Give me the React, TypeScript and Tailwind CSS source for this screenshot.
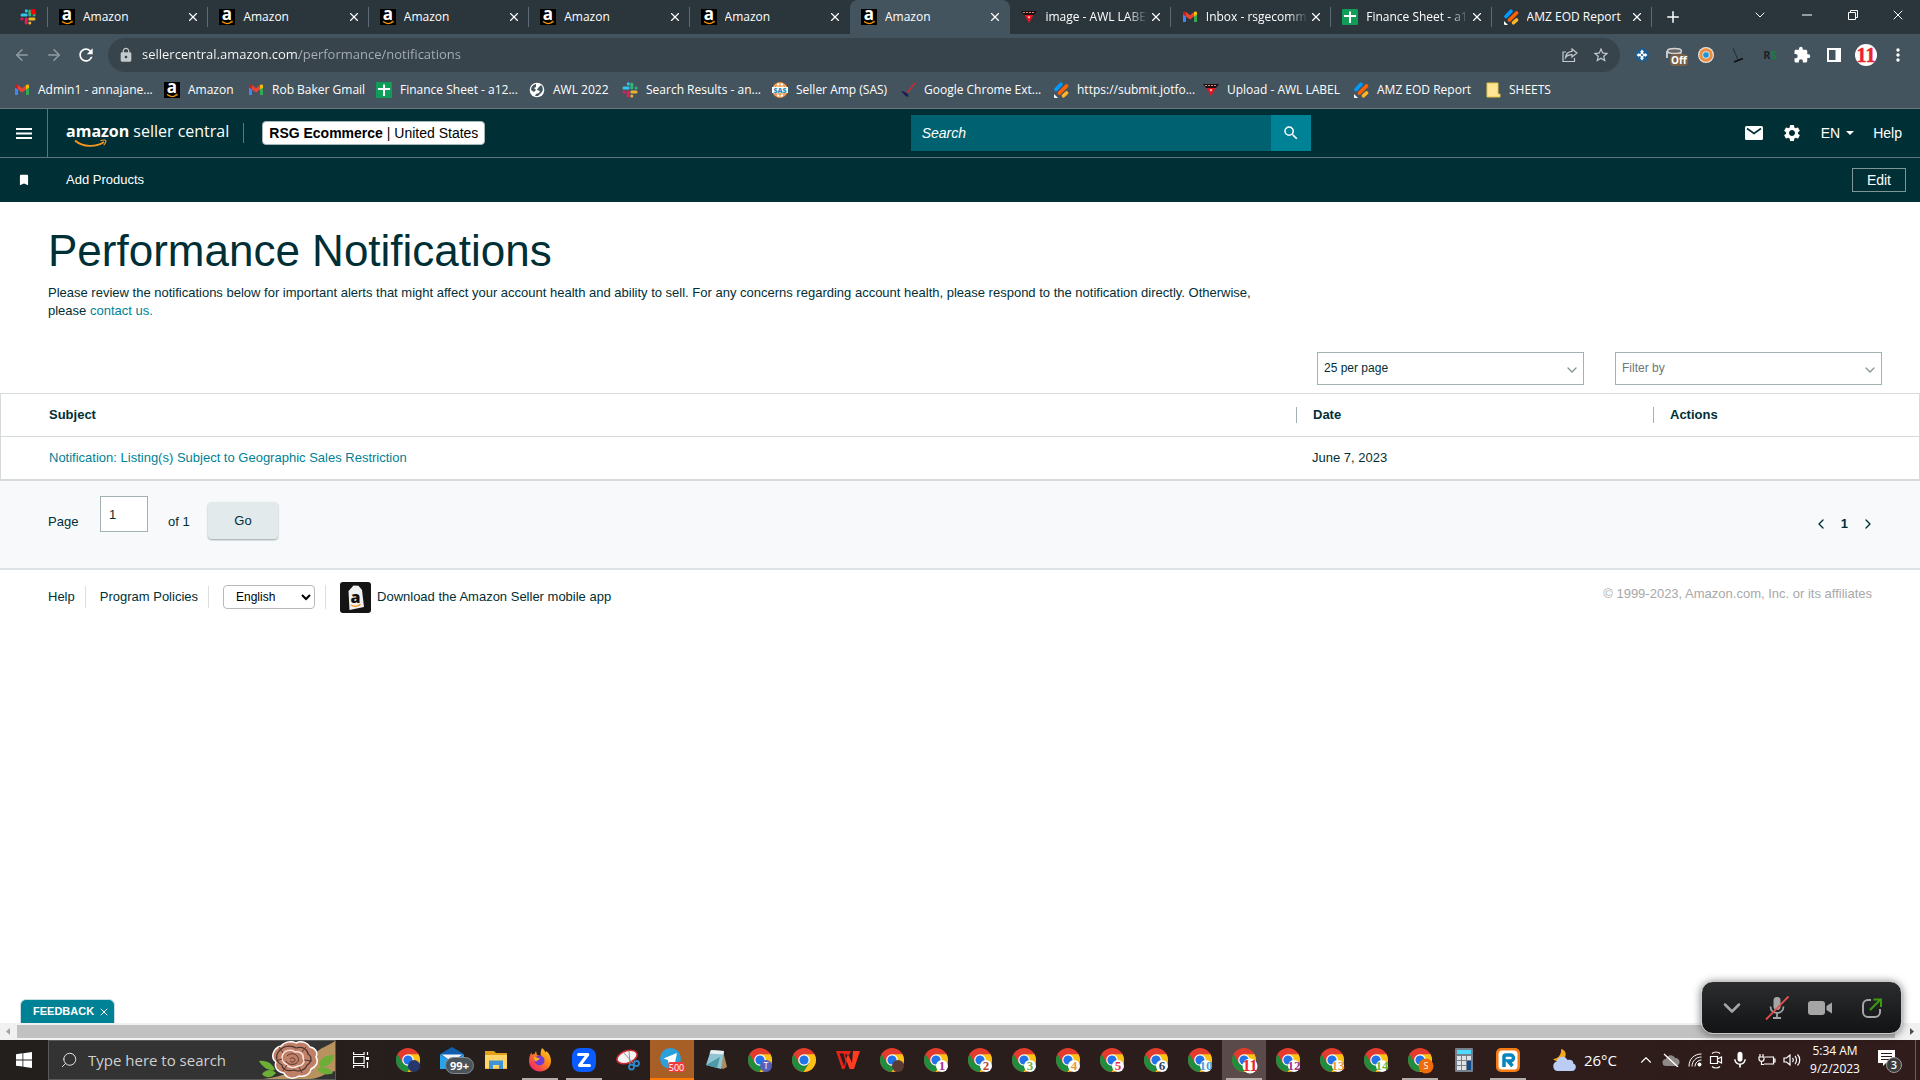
import * as React from "react"
import { clsx } from "clsx"
import {
    ArrowLeft,
    ArrowRight,
    ChevronDown,
    ChevronLeft,
    ChevronRight,
    ChevronUp,
    Minus,
    Plus,
    Search,
    X,
} from "lucide-react"
import {
    MdBookmark,
    MdExtension,
    MdLock,
    MdMic,
    MdMoreVert,
    MdRefresh,
    MdSearch,
    MdSettings,
    MdStarBorder,
} from "react-icons/md"

type IconProps = { className?: string }

/* ---------- site icons ---------- */

function AmazonIcon({ className = "size-4" }: IconProps) {
    return (
        <svg viewBox="0 0 16 16" className={clsx("shrink-0", className)} aria-hidden="true">
            <rect width="16" height="16" fill="#000" />
            <text x="8" y="11" textAnchor="middle" fontFamily="Open Sans, sans-serif" fontWeight="700" fontSize="17" fill="#fff">a</text>
            <path d="M3 12.600c3 2.200 7 2.200 9.600.4" fill="none" stroke="#f90" strokeWidth="1.200" />
            <path d="M11.400 12.300l2-.2-.5 1.800" fill="none" stroke="#f90" strokeWidth=".8" />
        </svg>
    )
}

function SlackIcon({ className = "size-4", dot }: IconProps & { dot?: boolean }) {
    return (
        <svg viewBox="0 0 16 16" className={clsx("shrink-0", className)} aria-hidden="true">
            <g strokeWidth="3" strokeLinecap="round">
                <path d="M2 6h4.200" stroke="#36c5f0" />
                <path d="M6.300 1.800v.1" stroke="#36c5f0" />
                <path d="M9.800 2v4" stroke="#2eb67d" />
                <path d="M14.100 6h.1" stroke="#2eb67d" />
                <path d="M9.800 10H14" stroke="#ecb22e" />
                <path d="M9.800 14v.1" stroke="#ecb22e" />
                <path d="M6.200 10v4" stroke="#e01e5a" />
                <path d="M1.900 10H2" stroke="#e01e5a" />
            </g>
            {dot && <circle cx="13.300" cy="2.700" r="2.700" fill="#f00" />}
        </svg>
    )
}

function GmailIcon() {
    return (
        <svg viewBox="0 0 16 16" className="size-4 shrink-0" aria-hidden="true">
            <path d="M1 4v9h3V7z" fill="#4285f4" />
            <path d="M15 4v9h-3V7z" fill="#34a853" />
            <path d="M1 5.500V4c0-1.600 1.800-1.900 3-1v4.600z" fill="#c5221f" />
            <path d="M15 5.500V4c0-1.600-1.800-1.900-3-1v4.600z" fill="#fbbc04" />
            <path d="M4 3l4 3.200L12 3v4.600l-4 3-4-3z" fill="#ea4335" />
        </svg>
    )
}

function SheetIcon() {
    return (
        <svg viewBox="0 0 16 16" className="size-4 shrink-0" aria-hidden="true">
            <rect width="16" height="16" rx="1" fill="#0f9d58" />
            <path d="M7 2.500h2V6h5v2H9v6H7V8H2V6h5z" fill="#fff" />
        </svg>
    )
}

function GlobeIcon() {
    return (
        <svg viewBox="0 0 16 16" className="size-4 shrink-0" aria-hidden="true">
            <circle cx="8" cy="8" r="7.300" fill="#fff" />
            <path d="M7 2c-3 .5-5 3-5 6l3 2 2-2-2-2 2-1zM9 6l3-3c2 1.500 2.500 5 1 7l-2 2-2 2H6l1-2 3-1 1-2-3-1z" fill="#44545e" />
        </svg>
    )
}

function SasIcon() {
    return (
        <svg viewBox="0 0 16 16" className="size-4 shrink-0" aria-hidden="true">
            <circle cx="8" cy="8" r="7.500" fill="#fff" stroke="#e8832a" />
            <path d="M8 .5v15M4.500 1.500c-1.500 4-1.500 9 0 13M11.500 1.500c1.500 4 1.500 9 0 13M1.500 4h13M1.500 12h13" fill="none" stroke="#e8832a" />
            <rect y="5" width="16" height="6" fill="#fff" />
            <text x="8" y="10.500" textAnchor="middle" fontFamily="Open Sans, sans-serif" fontWeight="800" fontSize="7" fill="#1a8bc4">SAS</text>
        </svg>
    )
}

function BroomIcon() {
    return (
        <svg viewBox="0 0 16 16" className="size-4 shrink-0" aria-hidden="true">
            <path d="M15 1L7 11" stroke="#d8262c" strokeWidth="1.300" />
            <path d="M1 9l3 .5 4 2.500.5 3-3-1z" fill="#1b1b55" />
        </svg>
    )
}

function JotformIcon() {
    return (
        <svg viewBox="0 0 16 16" className="size-4 shrink-0" aria-hidden="true">
            <g strokeLinecap="round" strokeWidth="3.600">
                <path d="M3 7.500L8 2.200" stroke="#0099ff" />
                <path d="M6.500 11L13.500 4" stroke="#ff6100" />
                <path d="M10.500 13.800L13.500 11" stroke="#ffb629" />
            </g>
            <path d="M1 12l4 4H2a1 1 0 0 1-1-1z" fill="#fff" />
        </svg>
    )
}

function LabelIcon() {
    return (
        <svg viewBox="0 0 16 16" className="size-4 shrink-0" aria-hidden="true">
            <path d="M0 2h16l-3 4H3z" fill="#1c1014" />
            <path d="M2 3.500h12" stroke="#d98a7d" strokeDasharray="2 1" />
            <path d="M3.500 6h9L8 14z" fill="#e8121c" />
            <path d="M6.500 7.500h3L8 9.500z" fill="#fff" />
        </svg>
    )
}

function FolderIcon() {
    return (
        <svg viewBox="0 0 16 16" className="size-4 shrink-0" aria-hidden="true">
            <path d="M2 1h11v11h2v3H2z" fill="#ffe594" stroke="#e8c33c" />
        </svg>
    )
}

const siteIcons = {
    amazon: AmazonIcon,
    slack: SlackIcon,
    gmail: GmailIcon,
    sheet: SheetIcon,
    globe: GlobeIcon,
    sas: SasIcon,
    broom: BroomIcon,
    jotform: JotformIcon,
    label: LabelIcon,
    folder: FolderIcon,
}

type SiteIconName = keyof typeof siteIcons

/* ---------- browser chrome ---------- */

interface Tab {
    title: string
    icon: SiteIconName
    active?: boolean
}

const tabs: Tab[] = [
    { title: "Amazon", icon: "amazon" },
    { title: "Amazon", icon: "amazon" },
    { title: "Amazon", icon: "amazon" },
    { title: "Amazon", icon: "amazon" },
    { title: "Amazon", icon: "amazon" },
    { title: "Amazon", icon: "amazon", active: true },
    { title: "image - AWL LABEL", icon: "label" },
    { title: "Inbox - rsgecomm", icon: "gmail" },
    { title: "Finance Sheet - a12", icon: "sheet" },
    { title: "AMZ EOD Report", icon: "jotform" },
]

const bookmarks: { title: string; icon: SiteIconName; width: string }[] = [
    { title: "Admin1 - annajane...", icon: "gmail", width: "w-[150px]" },
    { title: "Amazon", icon: "amazon", width: "w-[84px]" },
    { title: "Rob Baker Gmail", icon: "gmail", width: "w-[128px]" },
    { title: "Finance Sheet - a12...", icon: "sheet", width: "w-[153px]" },
    { title: "AWL 2022", icon: "globe", width: "w-[93px]" },
    { title: "Search Results - an...", icon: "slack", width: "w-[150px]" },
    { title: "Seller Amp (SAS)", icon: "sas", width: "w-[128px]" },
    { title: "Google Chrome Ext...", icon: "broom", width: "w-[153px]" },
    { title: "https://submit.jotfo...", icon: "jotform", width: "w-[150px]" },
    { title: "Upload - AWL LABEL", icon: "label", width: "w-[150px]" },
    { title: "AMZ EOD Report", icon: "jotform", width: "w-[132px]" },
    { title: "SHEETS", icon: "folder", width: "w-[93px]" },
]

function TabStrip() {
    return (
        <div className="flex h-[34px] bg-[#2b363c] text-white">
            <button aria-label="Slack" className="flex w-12 shrink-0 items-center justify-end">
                <SlackIcon dot />
                <span className="ml-[11px] h-5 w-px bg-[#5d6b74]" />
            </button>
            <div role="tablist" className="grid flex-1 grid-cols-10">
                {tabs.map((tab, i) => {
                    const Icon = siteIcons[tab.icon]
                    const nextActive = tabs[i + 1]?.active
                    return (
                        <div
                            key={i}
                            className={clsx(
                                "flex min-w-0 items-center pl-[11px] pr-1.5",
                                tab.active && "rounded-t-lg bg-[#44545e]"
                            )}
                        >
                            <button role="tab" aria-selected={!!tab.active} className="flex min-w-0 flex-1 items-center gap-2">
                                <Icon />
                                <span
                                    className={clsx(
                                        "min-w-0 flex-1 overflow-hidden whitespace-nowrap text-left text-xs leading-5",
                                        tab.title.length > 14 && "[mask-image:linear-gradient(to_right,#000_80%,transparent)]"
                                    )}
                                >
                                    {tab.title}
                                </span>
                            </button>
                            <button aria-label="Close tab" className="flex w-4 shrink-0 justify-center">
                                <X className="size-3.5" />
                            </button>
                            <span
                                className={clsx(
                                    "-mr-1.5 ml-1.5 h-5 w-px",
                                    tab.active || nextActive ? "bg-transparent" : "bg-[#5d6b74]"
                                )}
                            />
                        </div>
                    )
                })}
            </div>
            <div className="flex w-[268px] shrink-0 items-center justify-between pl-3 pr-3.5">
                <button aria-label="New tab"><Plus className="size-[18px]" /></button>
                <div className="flex w-[154px] items-center justify-between pb-1">
                    <button aria-label="Search tabs"><ChevronDown className="size-4" strokeWidth={1.5} /></button>
                    <button aria-label="Minimize"><Minus className="size-4" strokeWidth={1.5} /></button>
                    <button aria-label="Restore">
                        <svg viewBox="0 0 12 12" className="size-3 fill-none stroke-white">
                            <path d="M1.500 3.500h7v7h-7zM3.500 3V1.500h7v7H9" />
                        </svg>
                    </button>
                    <button aria-label="Close"><X className="size-4" strokeWidth={1.5} /></button>
                </div>
            </div>
        </div>
    )
}

function ShareIcon() {
    return (
        <svg viewBox="0 0 16 16" className="size-4 fill-none stroke-[#c3c9cd]" strokeWidth="1.200">
            <path d="M4 5H1v9.500h11.500V11" />
            <path d="M10 2l5 4-5 4V7.700c-3 0-5 .8-6.500 3 .3-3.700 2.500-6 6.500-6.400z" />
        </svg>
    )
}

function ProfileDisc({ label, color, className }: { label: string; color: string; className?: string }) {
    return (
        <svg viewBox="0 0 22 22" className={className} aria-hidden="true">
            <circle cx="11" cy="11" r="11" fill="#fff" />
            <text x="11" y="18" textAnchor="middle" fontFamily="Liberation Serif, serif" fontWeight="700" fontSize="20" fill={color} stroke={color} strokeWidth=".5">
                {label}
            </text>
        </svg>
    )
}

function Extensions() {
    return (
        <div className="flex items-center">
            <button aria-label="Keepa" className="flex w-8 justify-center">
                <svg viewBox="0 0 16 16" className="size-4">
                    <circle cx="8" cy="8" r="6.800" fill="#1c5d93" />
                    <path d="M8 2.500L10 5H6zM8 13.500L10 11H6zM2.500 8L5 6v4zM13.500 8L11 6v4z" fill="#fff" />
                    <path d="M6.700 5h2.600v1.700H11v2.600H9.300V11H6.700V9.300H5V6.700h1.700z" fill="#fff" />
                    <circle cx="8" cy="8" r="1" fill="#1c5d93" />
                </svg>
            </button>
            <button aria-label="Extension off" className="flex w-8 justify-center">
                <span className="relative">
                    <svg viewBox="0 0 16 16" className="size-4">
                        <path d="M1 4v7" stroke="#c9c9c9" strokeWidth="2" />
                        <ellipse cx="8.500" cy="4" rx="7" ry="2.500" fill="#666" stroke="#d5d5d5" strokeWidth="1.500" />
                        <path d="M14.500 5v4" stroke="#c9c9c9" strokeWidth="2" />
                    </svg>
                    <span className="absolute left-1 top-[7px] rounded-sm bg-[#7a6046] px-px text-[10px] font-bold leading-3 text-white">Off</span>
                </span>
            </button>
            <button aria-label="Seller extension" className="flex w-8 justify-center">
                <svg viewBox="0 0 16 16" className="size-4">
                    <circle cx="8" cy="8" r="8" fill="#e9e2da" />
                    <circle cx="8" cy="8" r="6.800" fill="#f08b3c" />
                    <circle cx="8" cy="8" r="3.800" fill="#bfe6f7" />
                    <circle cx="8" cy="8" r="2.800" fill="#2193d1" />
                </svg>
            </button>
            <button aria-label="Cleaner" className="flex w-8 justify-center">
                <svg viewBox="0 0 16 16" className="size-4">
                    <path d="M3 1l5 12" stroke="#222b30" />
                    <path d="M4 15l9-3.500" stroke="#0c0f11" strokeWidth="1.800" />
                </svg>
            </button>
            <button aria-label="RevSeller" className="flex w-8 justify-center text-[11px] font-bold leading-4 text-[#1d2225]">
                R<span className="text-[#11843d]">S</span>
            </button>
            <button aria-label="Extensions" className="flex w-8 justify-center text-white"><MdExtension className="size-[18px]" /></button>
            <button aria-label="Side panel" className="flex w-8 justify-center">
                <svg viewBox="0 0 14 14" className="size-3.5">
                    <path d="M0 0h14v14H0zM2 2v10h6.500V2z" fill="#fff" fillRule="evenodd" />
                </svg>
            </button>
            <button aria-label="Profile 11" className="flex w-8 justify-center">
                <ProfileDisc label="11" className="size-[22px]" color="#e8252f" />
            </button>
            <button aria-label="Menu" className="flex w-8 justify-center text-white"><MdMoreVert className="size-5" /></button>
        </div>
    )
}

function AddressRow() {
    return (
        <div className="flex h-[42px] items-center bg-[#44545e] px-1.5">
            <button aria-label="Back" className="flex w-8 justify-center text-[#909ca4]"><ArrowLeft className="size-[18px]" /></button>
            <button aria-label="Forward" className="flex w-8 justify-center text-[#909ca4]"><ArrowRight className="size-[18px]" /></button>
            <button aria-label="Reload" className="flex w-8 justify-center text-white"><MdRefresh className="size-5" /></button>
            <div className="ml-1.5 flex h-[34px] flex-1 items-center rounded-full bg-[#37444b] px-[10px] text-[#c3c9cd]">
                <MdLock className="size-4" />
                {/* host part is white, the path after it is dimmed */}
                <input
                    aria-label="Address"
                    className="ml-2 min-w-0 flex-1 bg-[linear-gradient(to_right,#fff_157px,#a9b1b6_157px)] bg-clip-text text-[13px] text-transparent outline-none"
                    defaultValue="sellercentral.amazon.com/performance/notifications"
                />
                <button aria-label="Share" className="mr-[14px]"><ShareIcon /></button>
                <button aria-label="Bookmark this page"><MdStarBorder className="size-[18px]" /></button>
            </div>
            <div className="ml-1.5"><Extensions /></div>
        </div>
    )
}

function BookmarkBar() {
    return (
        <nav aria-label="Bookmarks" className="flex h-[33px] items-center border-b border-[#6c7980] bg-[#44545e] pb-1 pl-3.5 text-white">
            {bookmarks.map((b) => {
                const Icon = siteIcons[b.icon]
                return (
                    <a key={b.title} href="#" className={clsx("flex shrink-0 items-center gap-2 whitespace-nowrap text-xs", b.width)}>
                        <Icon />
                        {b.title}
                    </a>
                )
            })}
        </nav>
    )
}

/* ---------- seller central ---------- */

function SellerLogo() {
    return (
        <a href="#" aria-label="amazon seller central" className="relative flex h-7 items-start gap-1 font-['Open_Sans',sans-serif] text-base text-white">
            <span className="font-bold">amazon</span>
            <span>seller central</span>
            <svg viewBox="0 0 34 9" className="absolute left-2 top-5 h-[9px] w-[34px] fill-none stroke-[#f7981d]" strokeWidth="1.800">
                <path d="M1 1.500c8 7 21 7 29 1.500" />
                <path d="M26.500 1.600c3-.8 5-.6 5.300 0 .2 1-.6 3-2 4.600" strokeWidth="1.200" />
            </svg>
        </a>
    )
}

function SellerHeader() {
    return (
        <header className="bg-[#002f36] text-white">
            <div className="flex h-[49px] items-center border-b border-[#5b777b]">
                <button aria-label="Menu" className="flex h-full w-12 items-center justify-center border-r border-[#5b777b]">
                    <svg viewBox="0 0 16 11" className="h-[11px] w-4">
                        <path d="M0 1h16M0 5.500h16M0 10h16" stroke="#fff" strokeWidth="1.800" />
                    </svg>
                </button>
                <div className="flex flex-[10] items-center pl-[18px]">
                    <SellerLogo />
                    <span className="ml-3.5 h-5 w-px bg-[#5b777b]" />
                    <button className="ml-[18px] h-6 rounded-sm border border-[#a6b5b7] bg-white px-1.5 text-sm leading-5 text-black">
                        <b>RSG Ecommerce</b> | United States
                    </button>
                </div>
                <form className="flex h-9 w-[400px]" onSubmit={(e) => e.preventDefault()}>
                    <input
                        aria-label="Search"
                        placeholder="Search"
                        className="min-w-0 flex-1 bg-[#006170] px-[11px] text-sm italic outline-none placeholder:text-white"
                    />
                    <button aria-label="Submit search" className="flex w-10 items-center justify-center bg-[#008296]">
                        <MdSearch className="size-[18px]" />
                    </button>
                </form>
                <div className="flex flex-[7] items-center justify-end gap-[19px] pr-[18px] text-sm">
                    <button aria-label="Messages">
                        <svg viewBox="0 0 18 14" className="h-3.5 w-[18px]">
                            <rect width="18" height="14" rx="1.500" fill="#fff" />
                            <path d="M2 2.500l7 5 7-5" fill="none" stroke="#002f36" strokeWidth="1.600" />
                        </svg>
                    </button>
                    <button aria-label="Settings"><MdSettings className="size-5" /></button>
                    <button className="flex items-center gap-1.5">
                        EN
                        <svg viewBox="0 0 8 4" className="h-1 w-2"><path d="M0 0h8L4 4z" fill="#fff" /></svg>
                    </button>
                    <a href="#">Help</a>
                </div>
            </div>
            <div className="flex h-11 items-center pr-3.5">
                <span className="flex w-12 justify-center"><MdBookmark className="size-3.5" /></span>
                <a href="#" className="ml-[18px] flex-1 text-[13px]">Add Products</a>
                <button className="h-6 border border-[#7f9699] px-[14px] text-sm leading-5">Edit</button>
            </div>
        </header>
    )
}

function FilterSelect({ label, muted }: { label: string; muted?: boolean }) {
    return (
        <div className="relative w-[267px]">
            <select
                aria-label={label}
                className={clsx(
                    "h-[33px] w-full appearance-none border border-[#a2b2b4] bg-white px-1.5 pb-0.5 text-xs",
                    muted ? "text-[#6c7778]" : "text-[#002f36]"
                )}
            >
                <option>{label}</option>
            </select>
            <ChevronDown className="pointer-events-none absolute right-1 top-2.5 size-4 text-[#8a9799]" />
        </div>
    )
}

const columns = ["Subject", "Date", "Actions"]

function NotificationsTable() {
    return (
        <table className="w-full table-fixed border-separate border-spacing-0 border border-b-2 border-[#d5dbdb] text-left text-[13px]">
            <colgroup>
                <col className="w-[1295px]" />
                <col className="w-[357px]" />
                <col />
            </colgroup>
            <thead>
                <tr className="h-[43px]">
                    {columns.map((name, i) => (
                        <th key={name} scope="col" className="border-b border-[#d5dbdb] p-0 font-bold">
                            <span className={clsx("block leading-4", i === 0 ? "pl-12" : "border-l border-[#a2b2b4] pl-4")}>{name}</span>
                        </th>
                    ))}
                </tr>
            </thead>
            <tbody>
                <tr className="h-[42px]">
                    <td className="p-0 pl-12">
                        <a href="#" className="text-[#008296]">Notification: Listing(s) Subject to Geographic Sales Restriction</a>
                    </td>
                    <td className="p-0 pl-4">June 7, 2023</td>
                    <td />
                </tr>
            </tbody>
        </table>
    )
}

function Pager() {
    return (
        <div className="flex h-[89px] items-start justify-between border-b-2 border-[#dfe2e5] bg-[#f8f9fb] pl-12 pr-11 pt-[15px] text-[13px]">
            <form className="flex items-start" onSubmit={(e) => e.preventDefault()}>
                <label htmlFor="page" className="w-[52px] pt-4">Page</label>
                <input id="page" defaultValue="1" className="h-9 w-12 border border-[#a2b2b4] bg-white px-2" />
                <span className="w-[60px] pl-5 pt-4">of 1</span>
                <button className="mt-1.5 h-[37px] w-[70px] rounded-sm bg-[#e3eaeb] shadow-[0_1px_2px_#9aa5a6]">Go</button>
            </form>
            <div className="flex items-center gap-3 pt-[18px] font-bold">
                <button aria-label="Previous page"><ChevronLeft className="size-4" /></button>
                <span>1</span>
                <button aria-label="Next page"><ChevronRight className="size-4" /></button>
            </div>
        </div>
    )
}

function SellerFooter() {
    return (
        <footer className="flex h-[54px] items-center justify-between px-12 text-[13px]">
            <div className="flex items-center">
                <a href="#" className="border-r border-[#dcdfe0] py-px pr-2.5">Help</a>
                <a href="#" className="border-r border-[#dcdfe0] py-px pl-3.5 pr-2.5">Program Policies</a>
                <select aria-label="Language" className="mx-3.5 h-6 w-[92px] rounded-sm border border-[#b5bbbc] bg-white pl-2 text-xs text-black">
                    <option>English</option>
                </select>
                <a href="#" className="flex items-center gap-1.5">
                    <span className="-ml-1 mr-2 h-6 w-px bg-[#dcdfe0]" />
                    <svg viewBox="0 0 31 31" className="size-[31px]" aria-hidden="true">
                        <rect width="31" height="31" rx="3" fill="#141414" />
                        <path d="M8.500 9l5-5.500 5 .3L22 8l2 17-14.500 3z" fill="#f1f1f1" />
                        <text x="15.500" y="20.500" textAnchor="middle" fontFamily="Open Sans, sans-serif" fontWeight="800" fontSize="16" fill="#111">a</text>
                        <path d="M11 23c3 2 7 1.500 9.500-1" fill="none" stroke="#f7981d" strokeWidth="1.500" />
                    </svg>
                    Download the Amazon Seller mobile app
                </a>
            </div>
            <span className="pb-1.5 text-[#a8a8a8]">© 1999-2023, Amazon.com, Inc. or its affiliates</span>
        </footer>
    )
}

/* ---------- floating items ---------- */

function FeedbackTab() {
    return (
        <div className="absolute bottom-[57px] left-5 flex h-6 items-center gap-1 rounded-t-md border border-b-0 border-[#c9dde0] bg-[#008296] pl-3 pr-1 font-['Liberation_Sans',Arial,sans-serif] text-[11px] font-bold text-white">
            <button>FEEDBACK</button>
            <button aria-label="Close feedback"><X className="size-3" /></button>
        </div>
    )
}

function MeetingBar() {
    return (
        <div className="absolute bottom-[46px] right-[18px] flex h-[53px] w-[201px] items-center rounded-xl border border-[#c9c9c9] bg-linear-to-b from-[#2c2d2f] to-[#121315] pl-4 text-[#a5a5a5] shadow-[0_1px_8px_#0008]">
            <button aria-label="Collapse" className="w-[46px]"><ChevronDown className="size-7" strokeWidth={2.2} /></button>
            <button aria-label="Unmute" className="w-[44px]">
                <svg viewBox="0 0 26 26" className="size-[26px] fill-none" strokeWidth="1.800">
                    <rect x="9.500" y="2" width="7" height="13" rx="3.500" fill="#a5a5a5" />
                    <path d="M6.500 11.500c0 8.500 13 8.500 13 0M13 18v5M9 23h8" stroke="#a5a5a5" />
                    <path d="M2 24.500L24.500 1.500" stroke="#e8504f" />
                </svg>
            </button>
            <button aria-label="Start video" className="w-[54px]">
                <svg viewBox="0 0 24 16" className="h-4 w-6" fill="#a5a5a5">
                    <rect y="1" width="17" height="14" rx="3" />
                    <path d="M18.500 6L24 2.500v11L18.500 10z" />
                </svg>
            </button>
            <button aria-label="Share screen">
                <svg viewBox="0 0 20 20" className="size-5 fill-none" strokeWidth="2">
                    <path d="M9 2H6a5 5 0 0 0-5 5v7a5 5 0 0 0 5 5h7a5 5 0 0 0 5-5v-3" stroke="#a5a5a5" />
                    <path d="M8 12L18 2M11.500 1.500H19V9" stroke="#3f9a12" />
                </svg>
            </button>
        </div>
    )
}

function Scrollbar() {
    return (
        <div className="flex h-[17px] items-center bg-[#f1f1f1]">
            <svg viewBox="0 0 17 17" className="size-[17px]"><path d="M10 5v7L6 8.500z" fill="#a3a3a3" /></svg>
            <div className="h-[13px] flex-1 bg-[#c1c1c1]" />
            <span className="w-2" />
            <svg viewBox="0 0 17 17" className="size-[17px]"><path d="M7 5v7l4-3.500z" fill="#505050" /></svg>
        </div>
    )
}

/* ---------- taskbar ---------- */

interface Badge {
    label: string
    color: string
    fill?: string
}

function ChromeIcon({ badge }: { badge?: Badge }) {
    return (
        <svg viewBox="0 0 24 24" className="size-6 overflow-visible" aria-hidden="true">
            <circle cx="12" cy="12" r="12" fill="#e33b2e" />
            <path d="M1.600 6A12 12 0 0 0 11.500 24L17 15H6.800z" fill="#1e8e3e" />
            <path d="M11.500 24A12 12 0 0 0 22.500 6.200H12l5.200 8.800z" fill="#fbc116" />
            <circle cx="12" cy="12" r="5.800" fill="#fff" />
            <circle cx="12" cy="12" r="4.600" fill="#2374e8" />
            {badge && (
                <>
                    <circle cx="18" cy="18" r={badge.label === "11" || badge.label === "S" ? 7.5 : 6} fill={badge.fill ?? "#fff"} />
                    <text
                        x="18"
                        y={badge.fill ? 21 : badge.label === "11" ? 23 : 22}
                        textAnchor="middle"
                        fontFamily={badge.fill ? "Open Sans, sans-serif" : "Liberation Serif, serif"}
                        fontWeight={badge.fill ? 400 : 700}
                        fontSize={badge.fill ? 9 : badge.label === "11" ? 16 : 13}
                        fill={badge.color}
                    >
                        {badge.label}
                    </text>
                </>
            )}
        </svg>
    )
}

function MailIcon() {
    return (
        <svg viewBox="0 0 34 28" className="ml-2.5 h-7 w-[34px] shrink-0 overflow-visible" aria-hidden="true">
            <path d="M0 8L12 1l12 7v15H0z" fill="#0f5fae" />
            <path d="M1.500 8.500h21L12 16z" fill="#eef6fc" />
            <path d="M0 8.500L12 16l12-7.500V23H0z" fill="#2aa3e8" />
            <rect x="5.500" y="11.500" width="28" height="16" rx="8" fill="#4b545b" stroke="#84898c" />
            <text x="19.500" y="23.500" textAnchor="middle" fontFamily="Open Sans, sans-serif" fontWeight="700" fontSize="11" fill="#fff">99+</text>
        </svg>
    )
}

function ExplorerIcon() {
    return (
        <svg viewBox="0 0 22 20" className="h-5 w-[22px]" aria-hidden="true">
            <path d="M0 1h9l2 2h11v16H0z" fill="#e0a019" />
            <path d="M0 5h22v13.500H0z" fill="#fdd568" />
            <path d="M4 19v-8.500h14V19h-4v-4H8v4z" fill="#3d94d8" />
        </svg>
    )
}

function FirefoxIcon() {
    return (
        <svg viewBox="0 0 24 24" className="size-6" aria-hidden="true">
            <defs>
                <linearGradient id="fox" x1="1" y1="0" x2=".2" y2="1">
                    <stop offset="0" stopColor="#ffe22e" />
                    <stop offset=".45" stopColor="#ff8a16" />
                    <stop offset="1" stopColor="#f0226b" />
                </linearGradient>
            </defs>
            <path d="M14 0c2 1.500 3 3 3.500 4.500.6-.4.8-1 .7-1.500C21 5 23 9 23 13c0 6-5 10.500-11 10.500S1 19 1 13c0-3.500 1-6.500 2.500-8.500L4 7c.8-.8 1.500-1 2.500-1L8 3l1 4 4 1c-1-3 0-6 1-8z" fill="url(#fox)" />
            <circle cx="11.500" cy="12.500" r="5" fill="#7139d6" />
            <path d="M6 9c3 0 4 1.500 6 1.500-1 2-3 1.500-4 3-1.500-1-2.500-2.500-2-4.500z" fill="#ffae1b" />
        </svg>
    )
}

function ZoomIcon() {
    return (
        <svg viewBox="0 0 24 24" className="size-6" aria-hidden="true">
            <rect width="24" height="24" rx="8" fill="#0b5cff" />
            <path d="M6.500 6.500h9.300L7.500 17.500h10" fill="none" stroke="#fff" strokeWidth="3" strokeLinecap="round" strokeLinejoin="round" />
        </svg>
    )
}

function SnipIcon() {
    return (
        <svg viewBox="0 0 24 24" className="size-6" aria-hidden="true">
            <ellipse cx="11" cy="9" rx="10.500" ry="6" transform="rotate(-20 11 9)" fill="#f4f4f4" stroke="#c72c31" strokeWidth="1.600" />
            <path d="M7 4l11 12M13 3l1 13" stroke="#8d9296" />
            <circle cx="15.500" cy="19" r="2.500" fill="none" stroke="#2e86c9" strokeWidth="1.800" />
            <circle cx="20.500" cy="15.500" r="2.500" fill="none" stroke="#2e86c9" strokeWidth="1.800" />
        </svg>
    )
}

function TelegramIcon() {
    return (
        <svg viewBox="0 0 24 24" className="size-6 overflow-visible" aria-hidden="true">
            <circle cx="10.500" cy="11.500" r="10.500" fill="#2ba0da" />
            <path d="M3.500 11.500L17 6l-2.500 12-4-3-2 2-.5-4z" fill="#fff" />
            <rect x="8.500" y="15" width="16" height="10" rx="1.500" fill="#f03a3a" />
            <text x="16.500" y="23.500" textAnchor="middle" fontFamily="Open Sans, sans-serif" fontSize="9" fill="#fff">500</text>
        </svg>
    )
}

function NotepadIcon() {
    return (
        <svg viewBox="0 0 24 24" className="size-6" aria-hidden="true">
            <path d="M19 3l4 16-4 2-3-1z" fill="#a98e62" />
            <path d="M7 2l13 1-3 18L2 17z" fill="#8fc5d3" />
            <path d="M7 2l13 1-.6 3.500L5.500 5.500z" fill="#e7eff1" />
            <path d="M16 9l-3 11-11-3z" fill="#4f98a8" />
        </svg>
    )
}

function WpsIcon() {
    return (
        <svg viewBox="0 0 24 20" className="h-5 w-6" aria-hidden="true">
            <path d="M0 1h15l-1.500 3.500H9L11 11 8.500 19H6z" fill="#e5231b" />
            <path d="M17 1h7l-6 18h-4.500L10 9l2-5 4 9z" fill="#ff3b21" />
            <path d="M3.500 3.500h4L9.500 12 8 16z" fill="#2c1d1c" />
        </svg>
    )
}

function CalculatorIcon() {
    return (
        <svg viewBox="0 0 18 24" className="h-6 w-[18px]" aria-hidden="true">
            <rect width="18" height="24" rx="1" fill="#75808a" />
            <rect x="2" y="2" width="14" height="4" fill="#50d9ff" />
            <path d="M2 8h4v4H2zM7 8h4v4H7zM12 8h4v4h-4zM2 13h4v4H2zM7 13h4v4H7zM2 18h4v4H2zM7 18h4v4H7z" fill="#dfe3e6" />
            <path d="M12 13h4v9h-4z" fill="#104a8c" />
        </svg>
    )
}

function RingIcon() {
    return (
        <svg viewBox="0 0 24 24" className="size-6" aria-hidden="true">
            <rect width="24" height="24" rx="5" fill="#f57c14" />
            <rect x="2.500" y="2.500" width="19" height="19" rx="3.500" fill="#fff" />
            <path d="M8 19V9a2 2 0 0 1 2-2h4.500a2.500 2.500 0 0 1 0 6H12l4.500 5" fill="none" stroke="#0684bd" strokeWidth="3.500" />
        </svg>
    )
}

function RoseArt() {
    return (
        <svg viewBox="0 0 76 38" className="h-[38px] w-[76px] shrink-0" aria-hidden="true">
            <path d="M4 38c20-2 38-10 50-24 8-8 15-9 22-14v30c-12 3-16 8-26 8z" fill="#b8935f" />
            <path d="M0 20c8-1 14 3 16 9-6 1-12-2-16-9zM3 33c4-5 10-5 14-1-4 5-10 6-14 1z" fill="#6cae36" />
            <path d="M60 22c3-6 8-8 15-8-1 8-6 12-14 12zM58 28c6-3 12-2 16 4-6 3-13 1-16-4z" fill="#6cae36" />
            <path d="M22 5c4-5 12-5 15-3 6-3 12 0 14 4 6 1 8 6 6 10 3 5 0 10-5 12-1 6-7 8-12 7-6 4-13 2-15-3-7-1-10-6-8-11-6-4-3-14 5-16z" fill="#c08067" stroke="#fff" strokeWidth="1.500" />
            <g fill="none">
                <path d="M20 10c6-7 14-5 17-3 7-2 12 2 12 6 5 3 3 9-1 11-2 6-9 7-13 5-7 2-12-1-12-5-6-3-7-9-3-14z" stroke="#463331" strokeWidth="1.200" />
                <path d="M24 13c3-5 10-4 12-2 5-1 9 2 8 6 3 4-1 8-5 8-5 3-10 1-12-2-4-2-5-6-3-10z" stroke="#fbe4dc" strokeWidth="1.500" />
                <path d="M28 15c3-3 8-3 10 0 3 3 1 7-2 8-4 1-8 0-9-3M31 18c2-2 5-1 5 1s-3 3-5 1M20 6l4 6M47 6l-4 5M53 20l-8-1M24 30l4-6M43 32l-3-6M17 20l6-2" stroke="#5d3a33" />
            </g>
        </svg>
    )
}

interface TaskItem {
    name: string
    icon: React.ReactNode
    open?: boolean
    className?: string
}

const chromeProfile = (label: string, color: string, extra: Partial<TaskItem> = {}, fill?: string): TaskItem => ({
    name: `Chrome ${label}`,
    icon: <ChromeIcon badge={{ label, color, fill }} />,
    ...extra,
})

const taskItems: TaskItem[] = [
    chromeProfile("", "#fff", { name: "Chrome globe profile" }, "#25366b"),
    { name: "Mail", icon: <MailIcon /> },
    { name: "File Explorer", icon: <ExplorerIcon /> },
    { name: "Firefox", icon: <FirefoxIcon />, open: true },
    { name: "Zoom", icon: <ZoomIcon />, open: true },
    { name: "Snipping Tool", icon: <SnipIcon /> },
    { name: "Telegram", icon: <TelegramIcon />, className: "bg-[#a85f26] border-b-2 border-[#ff7a00]" },
    { name: "Notepad", icon: <NotepadIcon /> },
    chromeProfile("T", "#fff", {}, "#5561b8"),
    { name: "Chrome", icon: <ChromeIcon /> },
    { name: "WPS Office", icon: <WpsIcon /> },
    chromeProfile("", "#fff", { name: "Chrome photo profile" }, "#5b3a33"),
    chromeProfile("1", "#a5308f"),
    chromeProfile("2", "#b5481f"),
    chromeProfile("3", "#6fb33a"),
    chromeProfile("4", "#eb9a35"),
    chromeProfile("5", "#e32a45"),
    chromeProfile("6", "#2b4468"),
    chromeProfile("10", "#4a9fd8"),
    chromeProfile("11", "#e8252f", { open: true, className: "bg-[#5a4a49]" }),
    chromeProfile("12", "#a5308f"),
    chromeProfile("13", "#eb9a35"),
    chromeProfile("14", "#6fb33a"),
    chromeProfile("S", "#fff", { open: true }, "#ee6c0a"),
    { name: "Calculator", icon: <CalculatorIcon /> },
    { name: "RingCentral", icon: <RingIcon />, open: true },
]

function SystemTray() {
    return (
        <div className="flex items-center text-white">
            <button className="flex items-center gap-2 text-[15px]">
                <svg viewBox="0 0 24 24" className="size-6" aria-hidden="true">
                    <path d="M9 1c5 1 6 6 3 10-3 3-8 3-11 0 5 0 9-5 8-10z" fill="#f3a91e" />
                    <path d="M5 23a5 5 0 0 1-.5-9.500C5.500 8 13 7 15.500 12c4-1 6 1 5.800 3.500 4 1 3 7.500-1.300 7.500z" fill="#b9cdf5" />
                </svg>
                26°C
            </button>
            <div className="ml-5 flex w-[164px] items-center justify-between">
                <ChevronUp className="size-[18px]" strokeWidth={1.5} />
                <svg viewBox="0 0 18 14" className="h-3.5 w-[18px]">
                    <path d="M4 13a3.500 3.500 0 0 1 0-7C5 1.500 11 1 13 5c3 0 5 2 4.500 5-.5 2-2 3-4 3z" fill="#8f8988" />
                    <path d="M2 1l14 13" stroke="#fff" strokeWidth="1.300" />
                </svg>
                <svg viewBox="0 0 14 14" className="size-3.5 fill-none stroke-white">
                    <path d="M1 13.500C1 6 6 1 13.500 1M4 13.500C4 8 8 4 13.500 4M7 13.500C7 10 10 7 13.500 7" />
                    <circle cx="11.500" cy="11.500" r="2" fill="#fff" stroke="none" />
                </svg>
                <svg viewBox="0 0 14 18" className="h-[18px] w-3.5 fill-none stroke-white" strokeWidth="1.200">
                    <path d="M3 2.500c2-2 6-2 8 0M3 15.500c2 2 6 2 8 0M1.500 5.500h7v7h-7zM8.500 8l4-2v6l-4-2" />
                </svg>
                <MdMic className="size-5" />
                <svg viewBox="0 0 18 14" className="h-3.5 w-[18px] fill-none stroke-white" strokeWidth="1.200">
                    <path d="M7 4h8.500v7H6M15.500 6H17v3h-1.500M2 1v3M5 1v3M1 4h5v2c0 3-5 3-5 0zM3.500 8v3.500H6" />
                </svg>
                <svg viewBox="0 0 18 14" className="h-3.5 w-[18px] fill-none stroke-white" strokeWidth="1.200">
                    <path d="M1 5h2.500L7 2v10L3.500 9H1zM9.500 5c1 1 1 3 0 4M12 3c2 2 2 6 0 8M14.500 1.500c3 3 3 8 0 11" />
                </svg>
            </div>
            <div className="w-[68px] text-center text-xs leading-[18px]">
                <div>5:34 AM</div>
                <div>9/2/2023</div>
            </div>
            <button aria-label="Notifications" className="mr-1 flex w-[42px] justify-center">
                <svg viewBox="0 0 26 26" className="size-[26px]">
                    <path d="M1 3h17v13H9l-3 3v-3H1z" fill="#fff" />
                    <path d="M4 6.500h11M4 9.500h11M4 12.500h8" stroke="#2e1c1a" />
                    <circle cx="17" cy="18" r="7.500" fill="#3c3c3c" stroke="#9b9b9b" />
                    <text x="17" y="22" textAnchor="middle" fontFamily="Open Sans, sans-serif" fontWeight="600" fontSize="11" fill="#fff">3</text>
                </svg>
            </button>
            <span className="h-10 w-[5px] border-l border-[#6c605e]" />
        </div>
    )
}

function Taskbar() {
    return (
        <div className="flex h-10 items-center bg-linear-to-r from-[#231f1c] to-[#301c1b]">
            <button aria-label="Start" className="flex w-12 shrink-0 justify-center">
                <svg viewBox="0 0 16 16" className="size-4 fill-white">
                    <path d="M0 2.200l6.500-.9v6.200H0zM7.300 1.200L16 0v7.500H7.300zM0 8.400h6.500v6.200L0 13.800zM7.300 8.400H16V16l-8.700-1.200z" />
                </svg>
            </button>
            <label className="flex h-10 w-72 shrink-0 items-center border border-[#5c5a59] bg-[#333] pl-[11px]">
                <Search className="size-[18px] -scale-x-100 text-[#e5e5e5]" strokeWidth={1.3} />
                <input aria-label="Taskbar search" placeholder="Type here to search" className="ml-2.5 min-w-0 flex-1 bg-transparent text-[15px] outline-none placeholder:text-[#d0d0d0]" />
                <RoseArt />
            </label>
            <button aria-label="Task view" className="flex w-[50px] shrink-0 justify-center">
                <svg viewBox="0 0 16 16" className="size-4 fill-none stroke-white" strokeWidth="1.200">
                    <path d="M.6 4.500h10.500v7H.6zM.6 0v2.500h10.500V0M.6 16v-2.500h10.500V16M14.500 0v3M14.500 10v6" />
                    <path d="M13 5h3v3h-3z" fill="#fff" stroke="none" />
                </svg>
            </button>
            {taskItems.map((item) => (
                <button
                    key={item.name}
                    aria-label={item.name}
                    className={clsx("relative flex h-10 w-11 shrink-0 items-center justify-center", item.className)}
                >
                    {item.icon}
                    {item.open && <span className="absolute inset-x-1 bottom-0 h-0.5 bg-[#b5adab]" />}
                </button>
            ))}
            <div className="flex flex-1 justify-end"><SystemTray /></div>
        </div>
    )
}

export default function App() {
    return (
        <div className="relative flex min-h-screen flex-col overflow-hidden bg-white font-['Open_Sans',sans-serif]">
            <TabStrip />
            <AddressRow />
            <BookmarkBar />
            <div className="flex flex-1 flex-col font-['Liberation_Sans',Arial,sans-serif]">
                <SellerHeader />
                <main className="text-[#002f36]">
                    <div className="px-12 pt-6">
                        <h1 className="text-[44px] leading-[50px]">Performance Notifications</h1>
                        <p className="mt-2 max-w-[1240px] text-[13px] leading-[18px]">
                            Please review the notifications below for important alerts that might affect your account health and ability to sell. For any concerns regarding account health, please respond to the notification directly. Otherwise, please{" "}
                            <a href="#" className="text-[#008296]">contact us.</a>
                        </p>
                    </div>
                    <div className="mb-2 mt-8 flex justify-end gap-[31px] pr-[38px]">
                        <FilterSelect label="25 per page" />
                        <FilterSelect label="Filter by" muted />
                    </div>
                    <NotificationsTable />
                    <Pager />
                    <SellerFooter />
                </main>
            </div>
            <Scrollbar />
            <Taskbar />
            <FeedbackTab />
            <MeetingBar />
        </div>
    )
}
